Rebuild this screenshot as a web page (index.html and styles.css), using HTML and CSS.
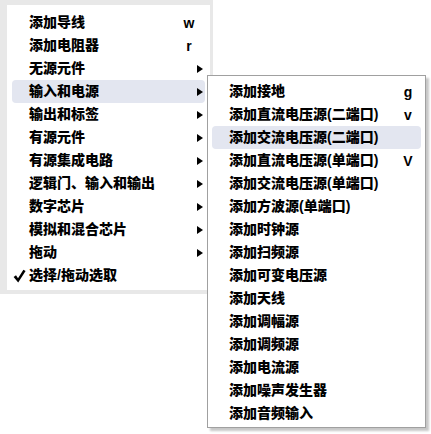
FILE: index.html
```html
<!DOCTYPE html>
<html lang="zh-CN">
<head>
  <meta charset="UTF-8">
  <meta name="viewport" content="width=device-width, initial-scale=1.0">
  <title>菜单</title>
  <link rel="stylesheet" href="styles.css">
</head>
<body>
  <div class="screen">
    <!-- Main menu -->
    <div class="menu-frame">
      <ul class="menu main-menu">
        <li class="item"><span class="label">添加导线</span><span class="key">w</span></li>
        <li class="item"><span class="label">添加电阻器</span><span class="key">r</span></li>
        <li class="item"><span class="label">无源元件</span><span class="arrow"></span></li>
        <li class="item hover"><span class="label">输入和电源</span><span class="arrow"></span></li>
        <li class="item"><span class="label">输出和标签</span><span class="arrow"></span></li>
        <li class="item"><span class="label">有源元件</span><span class="arrow"></span></li>
        <li class="item"><span class="label">有源集成电路</span><span class="arrow"></span></li>
        <li class="item"><span class="label">逻辑门、输入和输出</span><span class="arrow"></span></li>
        <li class="item"><span class="label">数字芯片</span><span class="arrow"></span></li>
        <li class="item"><span class="label">模拟和混合芯片</span><span class="arrow"></span></li>
        <li class="item"><span class="label">拖动</span><span class="arrow"></span></li>
        <li class="item checked">
          <span class="check">
            <svg width="13" height="14" viewBox="0 0 13 14">
              <path d="M0.6 8 L3 6.2 L5 9.2 L10.4 0.8 L12.6 2 L5.2 13.4 Z" fill="#000"/>
            </svg>
          </span>
          <span class="label">选择/拖动选取</span>
        </li>
      </ul>
    </div>

    <!-- Submenu: 输入和电源 -->
    <ul class="menu submenu">
      <li class="item"><span class="label">添加接地</span><span class="key">g</span></li>
      <li class="item"><span class="label">添加直流电压源(二端口)</span><span class="key">v</span></li>
      <li class="item hover"><span class="label">添加交流电压源(二端口)</span></li>
      <li class="item"><span class="label">添加直流电压源(单端口)</span><span class="key">V</span></li>
      <li class="item"><span class="label">添加交流电压源(单端口)</span></li>
      <li class="item"><span class="label">添加方波源(单端口)</span></li>
      <li class="item"><span class="label">添加时钟源</span></li>
      <li class="item"><span class="label">添加扫频源</span></li>
      <li class="item"><span class="label">添加可变电压源</span></li>
      <li class="item"><span class="label">添加天线</span></li>
      <li class="item"><span class="label">添加调幅源</span></li>
      <li class="item"><span class="label">添加调频源</span></li>
      <li class="item"><span class="label">添加电流源</span></li>
      <li class="item"><span class="label">添加噪声发生器</span></li>
      <li class="item"><span class="label">添加音频输入</span></li>
    </ul>
  </div>
</body>
</html>
```

FILE: styles.css
```css
/* Base */
body {
  margin: 0;
  background: #fff;
  font-family: "Liberation Sans", "Noto Sans CJK SC", sans-serif;
  font-size: 14px;
  font-weight: 900;
  color: #000;
}

.screen {
  position: relative;
  width: 431px;
  height: 434px;
}

/* Menu frame */
.menu-frame {
  width: 203px;
  border-style: solid;
  border-color: #e8e8e8;
  border-width: 5px 3px 4px 7px;
  background: #fff;
}

.menu {
  list-style: none;
  margin: 0;
}

.main-menu {
  padding: 6px 5px 3px 5px;
}

/* Rows */
.item {
  display: flex;
  align-items: center;
  height: 23px;
  padding-left: 17px;
  border-radius: 4px;
  white-space: nowrap;
}

.item.hover {
  background: #e3e6f0;
}

.label {
  flex: 1;
  line-height: 23px;
}

.key {
  width: 16px;
  text-align: center;
  margin-right: 8px;
}

.arrow {
  width: 0;
  height: 0;
  border-top: 4px solid transparent;
  border-bottom: 4px solid transparent;
  border-left: 6px solid #000;
  margin-right: 2px;
}

.item.checked {
  padding-left: 0;
}

.check {
  width: 17px;
  display: flex;
  align-items: center;
  padding-left: 1px;
  box-sizing: border-box;
}

/* Submenu */
.submenu {
  position: absolute;
  left: 207px;
  top: 75px;
  width: 209px;
  padding: 4px 4px 2px 4px;
  background: #fff;
  border: 1px solid #a0a0a0;
  box-shadow: 3px 3px 2px rgba(0, 0, 0, 0.22);
}

.submenu .key {
  margin-right: 5px;
}
```
